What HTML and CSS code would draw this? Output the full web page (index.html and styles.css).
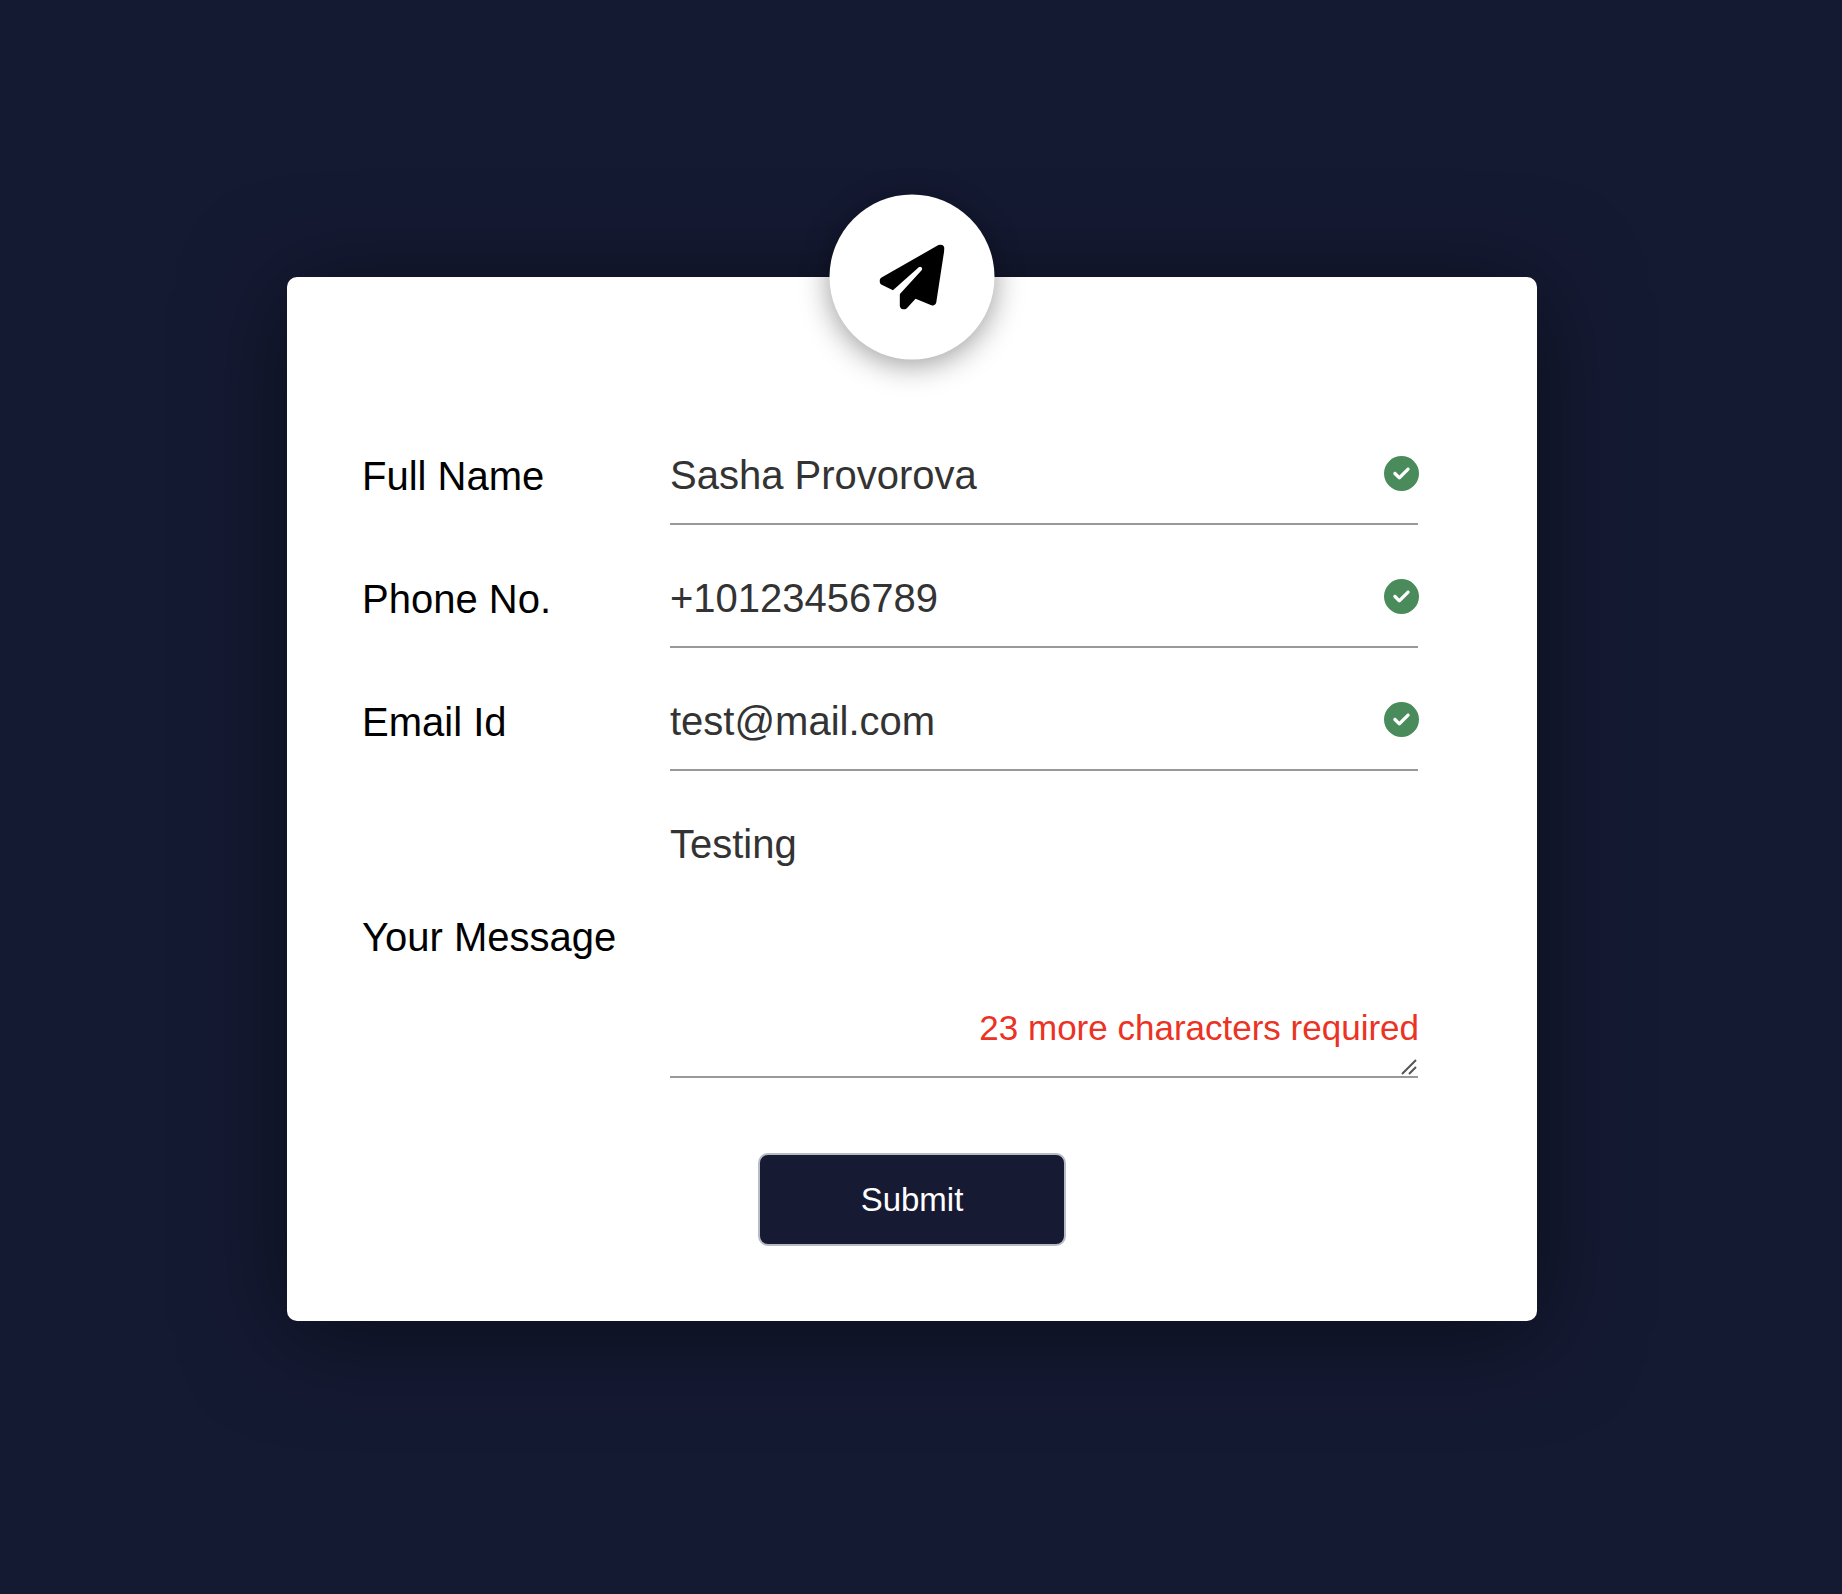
FILE: index.html
```html
<!DOCTYPE html>
<html lang="en">
<head>
<meta charset="utf-8">
<meta name="viewport" content="width=device-width, initial-scale=1">
<title>Contact form</title>
<link rel="stylesheet" href="styles.css">
</head>
<body class="page">
<svg class="symbols" aria-hidden="true">
  <symbol id="check" viewBox="0 0 512 512">
    <path d="M256 512A256 256 0 1 0 256 0a256 256 0 1 0 0 512zM369 209L241 337c-9.400 9.400-24.600 9.400-33.900 0l-64-64c-9.400-9.400-9.400-24.600 0-33.900s24.600-9.400 33.900 0l47 47L335 175c9.400-9.400 24.600-9.400 33.900 0s9.400 24.600 0 33.900z"/>
  </symbol>
</svg>
<main class="wrap">
  <form class="card">
    <div class="badge">
      <svg class="plane" viewBox="0 0 512 512" aria-hidden="true"><path d="M498.100 5.600c10.100 7 15.400 19.100 13.500 31.200l-64 416c-1.500 9.700-7.400 18.200-16 23s-18.900 5.400-28 1.600L284 427.700l-68.500 74.100c-8.900 9.700-22.900 12.900-35.200 8.100S160 493.200 160 480V396.400c0-4 1.500-7.800 4.200-10.700L331.800 202.800c5.800-6.300 5.600-16-.4-22s-15.700-6.400-22-.7L106 360.800 17.700 316.600C7.100 311.300 .3 300.700 0 288.900s5.900-22.800 16.100-28.700l448-256c10.700-6.100 23.900-5.500 34 1.400z"/></svg>
    </div>
    <div class="row">
      <label class="label" for="name">Full Name</label>
      <div class="control">
        <input class="field" id="name" type="text" value="Sasha Provorova">
        <svg class="valid" aria-hidden="true"><use href="#check"/></svg>
      </div>
    </div>
    <div class="row">
      <label class="label" for="phone">Phone No.</label>
      <div class="control">
        <input class="field" id="phone" type="tel" value="+10123456789">
        <svg class="valid" aria-hidden="true"><use href="#check"/></svg>
      </div>
    </div>
    <div class="row">
      <label class="label" for="email">Email Id</label>
      <div class="control">
        <input class="field" id="email" type="email" value="test@mail.com">
        <svg class="valid" aria-hidden="true"><use href="#check"/></svg>
      </div>
    </div>
    <div class="row">
      <label class="label" for="message">Your Message</label>
      <div class="control">
        <textarea class="field message" id="message" aria-describedby="message-error">Testing</textarea>
        <span class="error" id="message-error">23 more characters required</span>
        <svg class="grip" viewBox="0 0 16 16" aria-hidden="true"><path d="M1 15L15 1M8 15L15 8"/></svg>
      </div>
    </div>
    <button class="submit" type="submit">Submit</button>
  </form>
</main>
</body>
</html>
```

FILE: styles.css
```css
* {
  box-sizing: border-box;
}

.page {
  margin: 0;
  background: #151a33;
  color: #000;
  font-family: Helvetica, "Liberation Sans", Arial, sans-serif;
  font-size: 40px;
  line-height: 46px;
}

.symbols {
  display: none;
}

.wrap {
  display: flex;
  align-items: center;
  justify-content: center;
  min-height: 100vh;
  padding: 104px 38px 100px 20px;
}

.card {
  position: relative;
  display: flex;
  flex-direction: column;
  width: 100%;
  max-width: 1250px;
  padding: 125px 75px 75px;
  border-radius: 10px;
  background: #fff;
  box-shadow: 0 12px 100px rgba(0, 0, 0, 0.5);
}

.badge {
  position: absolute;
  top: 0;
  left: 50%;
  display: grid;
  place-items: center;
  width: 165px;
  height: 165px;
  border-radius: 50%;
  background: #fff;
  box-shadow: 0 5px 30px rgba(0, 0, 0, 0.4);
  transform: translate(-50%, -50%);
}

.plane {
  width: 65px;
  height: 65px;
}

.row {
  display: grid;
  grid-template-columns: 308px 1fr;
  align-items: center;
  margin-top: 25px;
  padding-right: 44px;
}

.control {
  position: relative;
  display: flex;
}

.field {
  width: 100%;
  margin: 0;
  padding: 25px 0;
  border: 0;
  border-bottom: 2px solid #999;
  border-radius: 0;
  outline: 0;
  background: transparent;
  color: #333;
  font: inherit;
}

input.field {
  height: 98px;
}

.message {
  height: 282px;
  resize: none;
}

.valid {
  position: absolute;
  top: 29px;
  right: -1px;
  width: 35px;
  height: 35px;
  fill: #4a8b5c;
}

.error {
  position: absolute;
  right: -1px;
  bottom: 30px;
  color: #eb3223;
  font-size: 35px;
  line-height: 40px;
}

.grip {
  position: absolute;
  right: 1px;
  bottom: 3px;
  width: 16px;
  height: 16px;
  fill: none;
  stroke: #555;
  stroke-width: 2;
}

.submit {
  align-self: center;
  width: 308px;
  margin-top: 75px;
  padding: 25px 0;
  border: 2px solid #b7bbc4;
  border-radius: 10px;
  background: #171a33;
  color: #fff;
  font: inherit;
  font-size: 33px;
  line-height: 39px;
}
```
